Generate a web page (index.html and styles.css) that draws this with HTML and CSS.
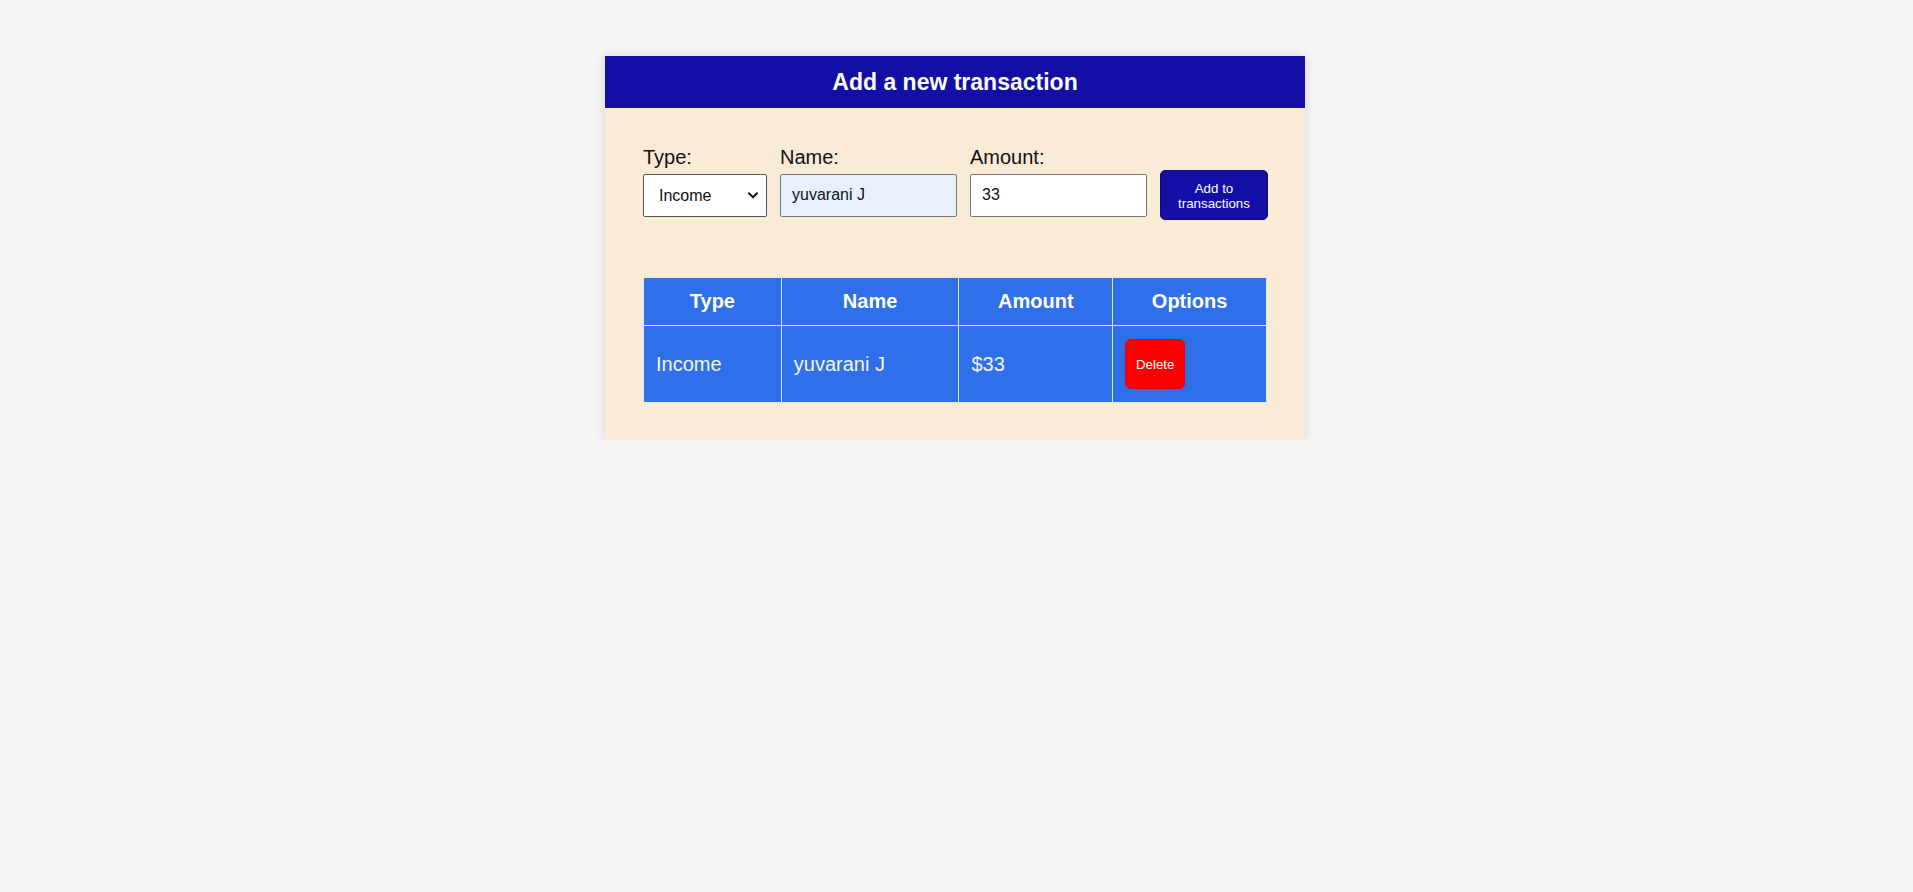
FILE: index.html
```html
<!DOCTYPE html>
<html lang="en">
<head>
<meta charset="utf-8">
<title>Transactions</title>
<link rel="stylesheet" href="styles.css">
</head>
<body>
<div class="card">
  <h2 class="card-title">Add a new transaction</h2>
  <div class="card-body">
    <form class="tx-form">
      <label class="lbl" for="type">Type:</label>
      <label class="lbl" for="name">Name:</label>
      <label class="lbl" for="amount">Amount:</label>
      <span></span>
      <div class="sel-wrap">
        <select id="type" class="ctrl sel">
          <option>Income</option>
          <option>Expense</option>
        </select>
        <svg class="chev" width="10" height="7" viewBox="0 0 10 7" aria-hidden="true"><path d="M1 1.2 L5 5.2 L9 1.2" fill="none" stroke="#111" stroke-width="2" stroke-linecap="round" stroke-linejoin="round"/></svg>
      </div>
      <input id="name" class="ctrl inp autofilled" type="text" value="yuvarani J">
      <input id="amount" class="ctrl inp" type="text" value="33">
      <button type="button" class="add-btn">Add to transactions</button>
    </form>
    <table class="tx-table">
      <thead>
        <tr>
          <th class="c1">Type</th>
          <th class="c2">Name</th>
          <th class="c3">Amount</th>
          <th class="c4">Options</th>
        </tr>
      </thead>
      <tbody>
        <tr>
          <td>Income</td>
          <td>yuvarani J</td>
          <td>$33</td>
          <td><button type="button" class="del-btn">Delete</button></td>
        </tr>
      </tbody>
    </table>
  </div>
</div>
</body>
</html>
```
FILE: styles.css
```css
html, body {
  margin: 0;
  padding: 0;
}
body {
  background: #f4f4f4;
  font-family: "Liberation Sans", Arial, sans-serif;
  color: #111;
}
.card {
  width: 700px;
  margin: 56px 0 0 calc(50% - 351.5px);
  background: #faebd7;
  box-shadow: 0 0 10px rgba(0, 0, 0, 0.12);
}
.card-title {
  margin: 0;
  height: 52px;
  line-height: 52px;
  background: #130ea6;
  color: #fff;
  text-align: center;
  font-size: 23px;
  font-weight: bold;
}
.card-body {
  padding: 38px 38px 37px;
}
.tx-form {
  display: grid;
  grid-template-columns: 124px 177px 177px 108px;
  column-gap: 13px;
  row-gap: 1px;
  align-items: center;
  margin: 0 0 57px 0;
}
.lbl {
  font-size: 20px;
  line-height: 23px;
  color: #111;
}
.ctrl {
  box-sizing: border-box;
  height: 43px;
  font-family: "Liberation Sans", Arial, sans-serif;
  font-size: 16px;
  color: #111;
  margin: 0;
}
.sel-wrap {
  position: relative;
  width: 124px;
  height: 43px;
}
.sel {
  display: block;
  width: 124px;
  border: 1px solid #555;
  border-radius: 2px;
  background: #fff;
  padding: 0 24px 0 15px;
  -webkit-appearance: none;
  appearance: none;
}
.chev {
  position: absolute;
  right: 9px;
  top: 18px;
  pointer-events: none;
}
.inp {
  width: 177px;
  border: 1px solid #767676;
  border-radius: 2px;
  background: #fff;
  padding: 0 10px 0 11px;
}
.inp.autofilled {
  background: #e8f0fe;
}
.add-btn {
  box-sizing: border-box;
  width: 108px;
  height: 50px;
  background: #130ea6;
  color: #fff;
  border: 1px solid #0e0a80;
  border-radius: 5px;
  font-family: "Liberation Sans", Arial, sans-serif;
  font-size: 13.333px;
  line-height: 15px;
  padding: 2px 16px 0;
}
.tx-table {
  width: 624px;
  border-collapse: collapse;
  background: #306fea;
  color: #fff;
}
.tx-table th,
.tx-table td {
  border: 1px solid #e3e6ef;
  font-size: 20px;
  line-height: 23px;
}
.tx-table th {
  font-weight: bold;
  text-align: center;
  padding: 12px;
}
.tx-table td {
  text-align: left;
  padding: 13px 12px;
  color: #f4f6fb;
}
.c1 { width: 138px; box-sizing: border-box; }
.c2 { width: 178px; box-sizing: border-box; }
.c3 { width: 154px; box-sizing: border-box; }
.c4 { width: 154px; box-sizing: border-box; }
.del-btn {
  box-sizing: border-box;
  display: block;
  width: 60px;
  height: 50px;
  background: #ff0000;
  color: #fff;
  border: 1px solid #e00000;
  border-radius: 6px;
  font-family: "Liberation Sans", Arial, sans-serif;
  font-size: 13.333px;
  padding: 0;
}
```
